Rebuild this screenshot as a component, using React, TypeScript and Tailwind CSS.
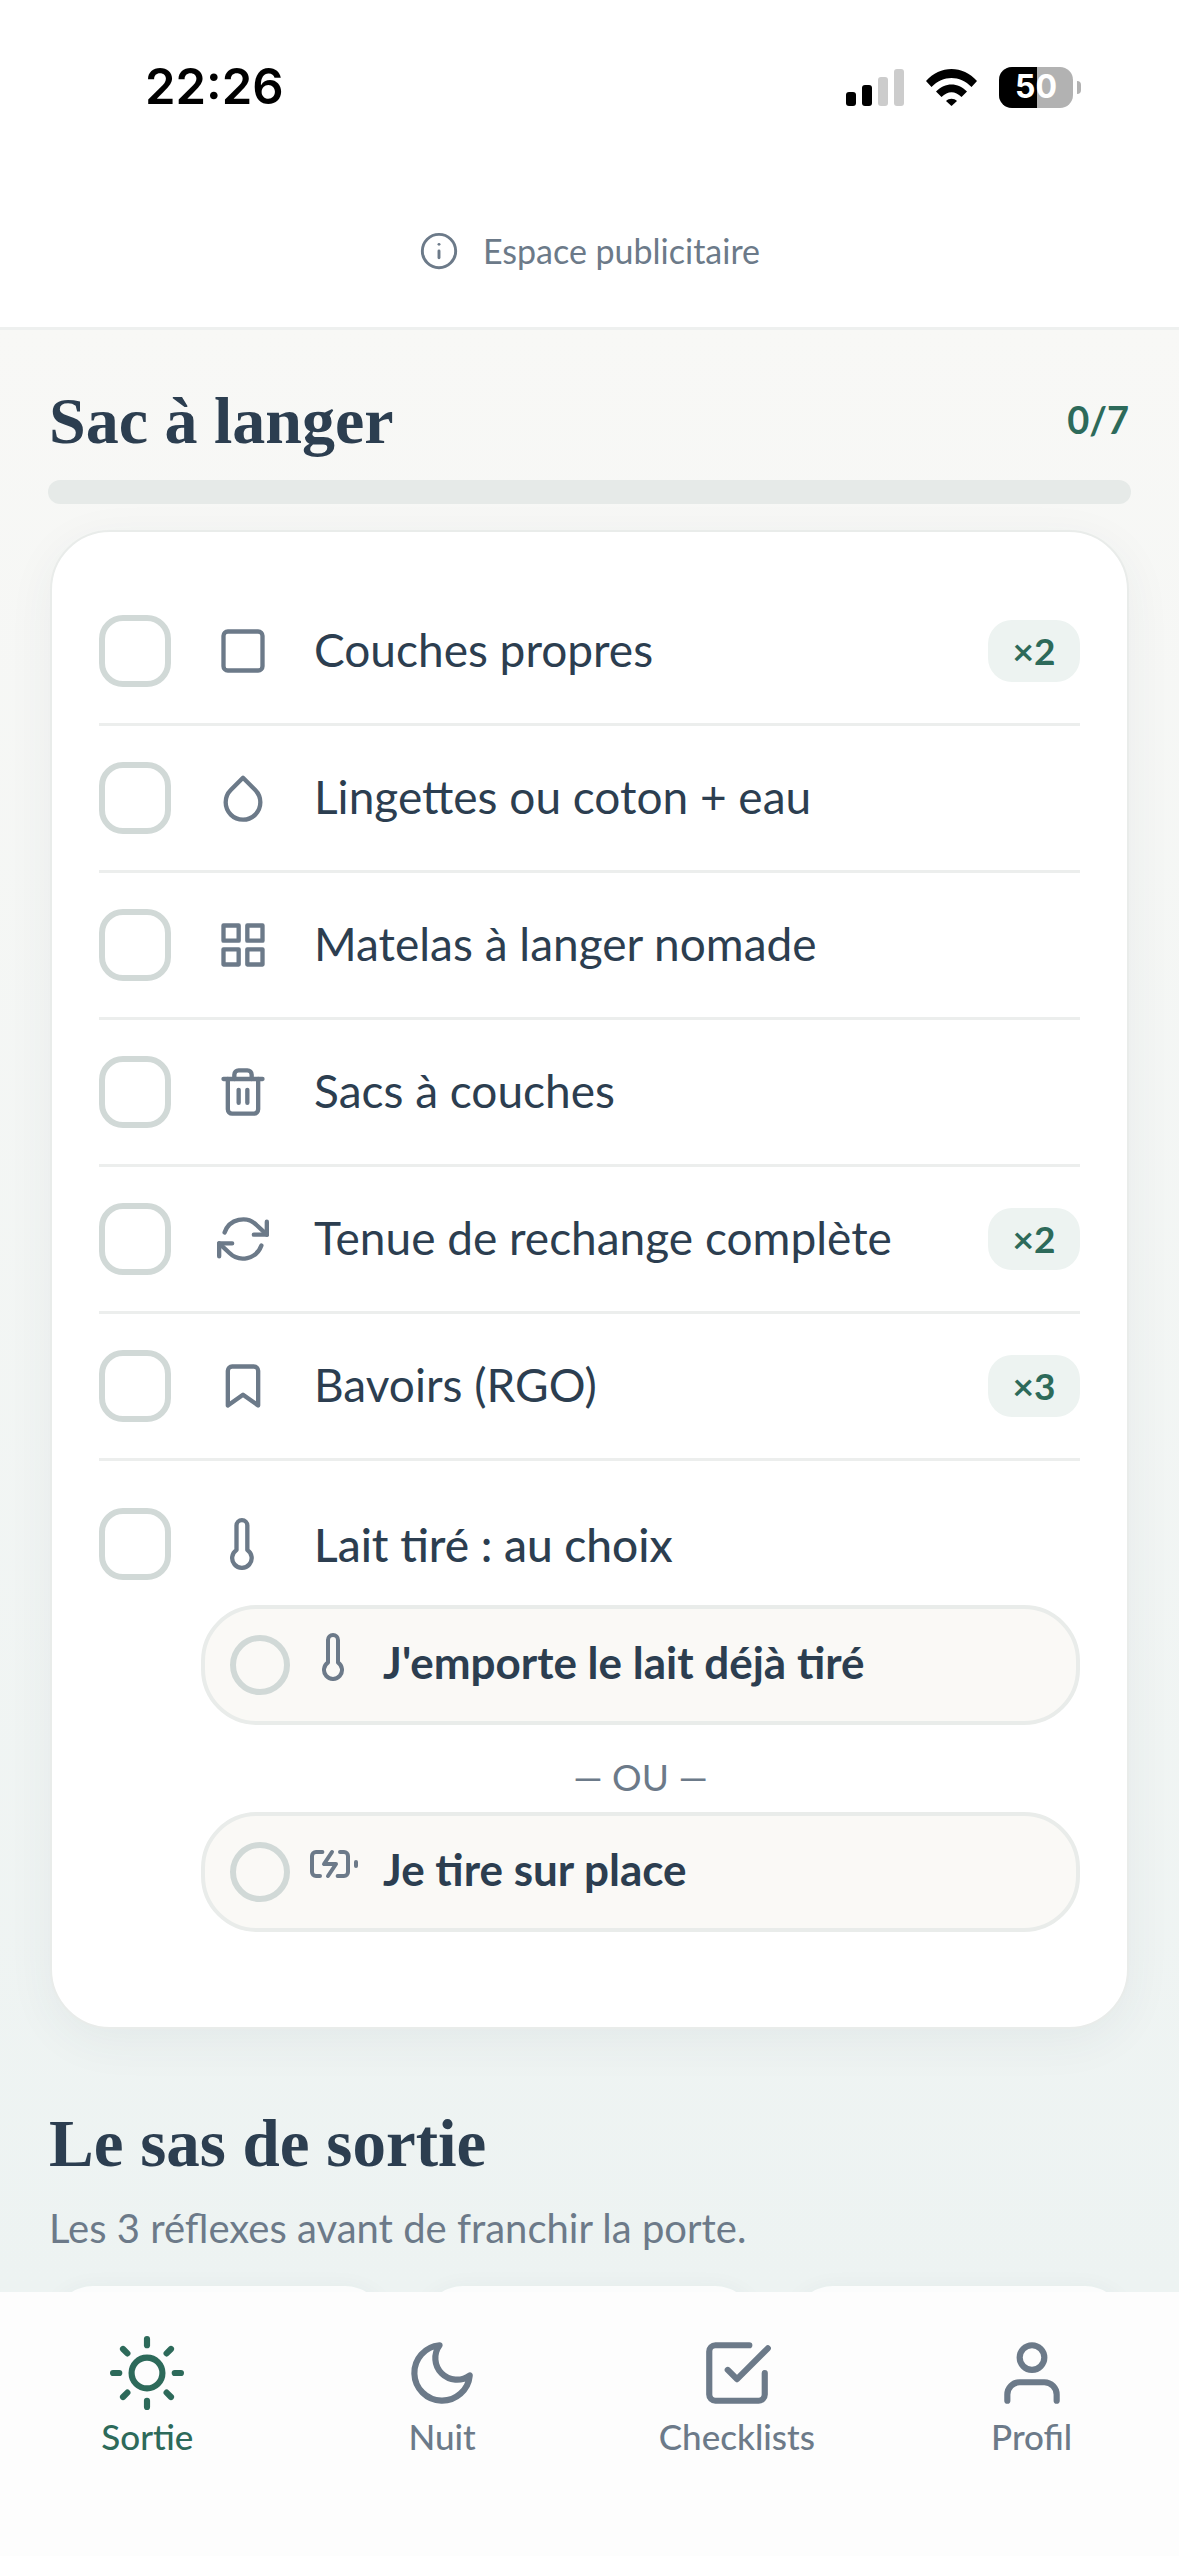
import type { ReactNode } from "react";
import {
  FiBatteryCharging,
  FiBookmark,
  FiCheckSquare,
  FiDroplet,
  FiGrid,
  FiInfo,
  FiMoon,
  FiRefreshCw,
  FiSquare,
  FiSun,
  FiThermometer,
  FiTrash2,
  FiUser,
} from "react-icons/fi";

const items = [
  { label: "Couches propres", icon: <FiSquare size={52} />, qty: "×2" },
  { label: "Lingettes ou coton + eau", icon: <FiDroplet size={52} /> },
  { label: "Matelas à langer nomade", icon: <FiGrid size={52} /> },
  { label: "Sacs à couches", icon: <FiTrash2 size={52} /> },
  { label: "Tenue de rechange complète", icon: <FiRefreshCw size={52} />, qty: "×2" },
  { label: "Bavoirs (RGO)", icon: <FiBookmark size={52} />, qty: "×3" },
];

const tabs = [
  { label: "Sortie", icon: <FiSun size={74} />, active: true },
  { label: "Nuit", icon: <FiMoon size={74} /> },
  { label: "Checklists", icon: <FiCheckSquare size={74} /> },
  { label: "Profil", icon: <FiUser size={74} /> },
];

function Checkbox() {
  return <span className="h-[72px] w-[72px] shrink-0 rounded-[24px] border-[6px] border-[#d1d9d7] bg-white" />;
}

function ChoiceOption({ icon, label }: { icon: ReactNode; label: string }) {
  return (
    <div className="flex h-[120px] items-center rounded-[56px] border-[4px] border-[#e9ecea] bg-[#faf9f6] pl-[25px]">
      <span className="h-[60px] w-[60px] shrink-0 rounded-full border-[6px] border-[#d1d9d7]" />
      <span className="mb-[16px] ml-[20px] flex w-[48px] shrink-0 justify-center text-[#6c7a89]">{icon}</span>
      <span className="mb-[6px] ml-[25px] text-[44px] font-bold text-[#2c3e50]">{label}</span>
    </div>
  );
}

export default function App() {
  return (
    <div className="flex h-[2556px] w-[1179px] flex-col overflow-hidden bg-white font-['Lato',sans-serif]">
      <header className="flex h-[174px] shrink-0 items-center justify-between pl-[145px] pr-[98px]">
        <span className="font-['Inter',sans-serif] text-[49px] font-semibold text-black">22:26</span>
        <div className="flex items-center">
          <div className="flex items-end gap-[6px]">
            <span className="h-[14px] w-[10px] rounded-[3px] bg-black" />
            <span className="h-[21px] w-[10px] rounded-[3px] bg-black" />
            <span className="h-[29px] w-[10px] rounded-[3px] bg-[#cccccc]" />
            <span className="h-[37px] w-[10px] rounded-[3px] bg-[#cccccc]" />
          </div>
          <svg className="ml-[22px]" width="51" height="38" viewBox="0 0 51 38">
            <path d="M0 13 C14 -3 37 -3 51 13 L45.500 19 C34 7 17 7 5.500 19 Z" fill="black" />
            <path d="M10 23.500 C19 14 32 14 41 23.500 L35.500 29 C29 22.500 22 22.500 15.500 29 Z" fill="black" />
            <path d="M20 33 C23 30 28 30 31 33 L25.500 38 Z" fill="black" />
          </svg>
          <div className="relative ml-[22px] flex h-[41px] w-[74px] items-center justify-center overflow-hidden rounded-[13px] bg-[#b2b2b2]">
            <span className="absolute inset-y-0 left-0 w-[38px] bg-black" />
            <span className="relative font-['Inter',sans-serif] text-[32px] font-bold leading-none text-white">50</span>
          </div>
          <span className="ml-[4px] h-[13px] w-[4px] rounded-r-full bg-[#b2b2b2]" />
        </div>
      </header>

      <div className="flex h-[156px] shrink-0 items-center justify-center gap-[24px] border-b-[3px] border-[#eef0ef] text-[#6c7a89]">
        <FiInfo size={40} strokeWidth={1.75} />
        <span className="text-[34px]">Espace publicitaire</span>
      </div>

      <main className="min-h-0 flex-1 overflow-hidden bg-gradient-to-b from-[#f8f8f6] to-[#edf3f2] px-[48px] pt-[54px]">
        <div className="flex h-[72px] items-center justify-between">
          <h1 className="pl-[1px] font-['Liberation_Serif',serif] text-[66px] font-bold text-[#2c3e50]">Sac à langer</h1>
          <span className="pb-[2px] pr-[2px] text-[38px] font-bold text-[#2d6a5a]">0/7</span>
        </div>
        <div className="mt-[24px] h-[24px] rounded-full bg-[#e6eae8]" />

        <section className="mx-[2px] mt-[26px] rounded-[60px] border-[2px] border-[#e9ecea] bg-white px-[47px] pb-[95px] pt-[47px] shadow-[0_12px_48px_rgba(44,62,80,0.06)]">
          {items.map((item) => (
            <div key={item.label} className="flex h-[147px] items-center border-b-[3px] border-[#eceeed]">
              <Checkbox />
              <span className="ml-[45px] flex w-[54px] shrink-0 justify-center text-[#6c7a89]">{item.icon}</span>
              <span className="mb-[3px] ml-[44px] flex-1 text-[46px] text-[#2c3e50]">{item.label}</span>
              {item.qty && (
                <span className="flex h-[62px] w-[92px] items-center justify-center rounded-[24px] bg-[#edf3f1] text-[37px] font-bold text-[#2d6a5a]">
                  {item.qty}
                </span>
              )}
            </div>
          ))}

          <div className="flex items-center pt-[47px]">
            <Checkbox />
            <span className="ml-[45px] flex w-[54px] shrink-0 justify-center text-[#6c7a89]">
              <FiThermometer size={52} />
            </span>
            <span className="ml-[44px] text-[46px] font-medium text-[#2c3e50]">Lait tiré : au choix</span>
          </div>

          <div className="ml-[102px] mt-[25px]">
            <ChoiceOption icon={<FiThermometer size={48} />} label="J'emporte le lait déjà tiré" />
            <p className="flex h-[87px] items-center justify-center pt-[16px] text-[37px] text-[#6c7a89]">— OU —</p>
            <ChoiceOption icon={<FiBatteryCharging size={48} />} label="Je tire sur place" />
          </div>
        </section>

        <h2 className="mt-[78px] h-[72px] pl-[1px] font-['Liberation_Serif',serif] text-[67px] font-bold leading-[72px] text-[#2c3e50]">
          Le sas de sortie
        </h2>
        <p className="mt-[25px] pl-[1px] text-[40px] leading-[48px] text-[#6c7a89]">Les 3 réflexes avant de franchir la porte.</p>
        <div className="mt-[34px] flex gap-[38px] pl-[5px]">
          <div className="h-[120px] w-[332px] rounded-[40px] bg-[#fbfcfc] shadow-[0_4px_24px_rgba(44,62,80,0.06)]" />
          <div className="h-[120px] w-[332px] rounded-[40px] bg-[#fbfcfc] shadow-[0_4px_24px_rgba(44,62,80,0.06)]" />
          <div className="h-[120px] w-[332px] rounded-[40px] bg-[#fbfcfc] shadow-[0_4px_24px_rgba(44,62,80,0.06)]" />
        </div>
      </main>

      <nav className="grid h-[264px] shrink-0 grid-cols-4 bg-[#fdfdfd] pt-[44px]">
        {tabs.map((tab) => (
          <div key={tab.label} className={`flex flex-col items-center ${tab.active ? "text-[#2d6a5a]" : "text-[#6c7a89]"}`}>
            {tab.icon}
            <span className="text-[35px] font-medium">{tab.label}</span>
          </div>
        ))}
      </nav>
    </div>
  );
}
